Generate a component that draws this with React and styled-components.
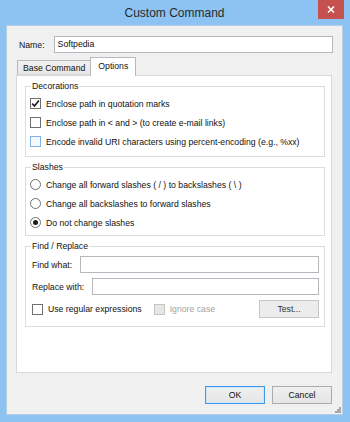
import React from "react";
import styled, { createGlobalStyle } from "styled-components";

const GlobalStyle = createGlobalStyle`
  html, body {
    margin: 0;
    padding: 0;
    background: #8cc3f3;
  }
  * {
    box-sizing: border-box;
  }
`;

const Window = styled.div`
  width: 350px;
  height: 422px;
  display: flex;
  flex-direction: column;
  padding: 0 7px 7px 6px;
  background: #8cc3f3;
  font-family: "Liberation Sans", Arial, sans-serif;
  font-size: 8.7px;
  color: #111;
`;

const TitleBar = styled.div`
  height: 25px;
  display: grid;
  grid-template-columns: 1fr auto 1fr;
  align-items: start;
`;

const Title = styled.div`
  grid-column: 2;
  font-size: 12px;
  line-height: 26px;
  color: #2a2a2a;
`;

const CloseButton = styled.div`
  grid-column: 3;
  justify-self: end;
  width: 26px;
  height: 19px;
  margin-right: -1px;
  background: #c75050;
  display: flex;
  align-items: center;
  justify-content: center;
`;

const Client = styled.div`
  position: relative;
  flex: 1;
  display: flex;
  flex-direction: column;
  background: #f0f0f0;
  border: 1px solid #b9cde0;
  padding: 10px 10px 10px 9px;
`;

const NameRow = styled.div`
  display: flex;
  align-items: center;
  gap: 9px;
  padding-left: 3px;
  margin-right: -1px;
`;

const Label = styled.span`
  white-space: nowrap;
  color: ${(p) => (p.$disabled ? "#a3a3a3" : "#111")};
`;

const TextInput = styled.div`
  flex: 1;
  height: 17px;
  background: #fff;
  border: 1px solid #b5b7bd;
  padding: 0 3px;
  line-height: 15px;
  white-space: nowrap;
`;

const TabStrip = styled.div`
  display: flex;
  align-items: flex-end;
  margin-top: 4px;
  padding-left: 1px;
  height: 18px;
  position: relative;
  z-index: 1;
`;

const Tab = styled.div`
  height: ${(p) => (p.$active ? "19px" : "15px")};
  margin-bottom: ${(p) => (p.$active ? "-1px" : "0")};
  margin-left: ${(p) => (p.$active ? "-1px" : "0")};
  padding: 0 ${(p) => (p.$active ? "7px" : "5px")};
  border: 1px solid #b8b8b8;
  border-bottom: ${(p) => (p.$active ? "none" : "1px solid #d9d9d9")};
  background: ${(p) =>
    p.$active ? "#fff" : "linear-gradient(#f2f2f2, #e6e6e6)"};
  line-height: ${(p) => (p.$active ? "16px" : "14px")};
  white-space: nowrap;
`;

const Panel = styled.div`
  flex: 1;
  background: #fff;
  border: 1px solid #d9d9d9;
  padding: 2px 6px 0 8px;
  display: flex;
  flex-direction: column;
  gap: 2px;
`;

const Group = styled.fieldset`
  margin: 0;
  padding: 0;
  min-width: 0;
  border: 1px solid #dcdcdc;
`;

const Legend = styled.legend`
  margin-left: 5px;
  padding: 0 1px;
  line-height: 16px;
  color: #111;
`;

const GroupBody = styled.div`
  display: flex;
  flex-direction: column;
  padding: ${(p) => p.$pad};
`;

const OptionRow = styled.div`
  display: flex;
  align-items: center;
  gap: ${(p) => p.$gap || "5px"};
  height: ${(p) => p.$h || "19px"};
  margin-top: ${(p) => p.$mt || "0"};
`;

const Box = styled.span`
  width: 11px;
  height: 11px;
  flex: none;
  display: flex;
  align-items: center;
  justify-content: center;
  border: 1px solid
    ${(p) => (p.$hover ? "#7fb4e6" : p.$disabled ? "#c4c4c4" : "#6f6f6f")};
  background: ${(p) =>
    p.$hover ? "#f3f9fe" : p.$disabled ? "#e6e6e6" : "#fff"};
`;

const Radio = styled.span`
  width: 11px;
  height: 11px;
  flex: none;
  border-radius: 50%;
  border: 1px solid #6f6f6f;
  background: #fff;
  display: flex;
  align-items: center;
  justify-content: center;

  &::after {
    content: "";
    width: 5px;
    height: 5px;
    border-radius: 50%;
    background: ${(p) => (p.$checked ? "#1a1a1a" : "transparent")};
  }
`;

const FieldRow = styled.div`
  display: flex;
  align-items: center;
  gap: 8px;
  margin-top: ${(p) => p.$mt};
`;

const Button = styled.div`
  width: 60px;
  height: 18px;
  flex: none;
  display: flex;
  align-items: center;
  justify-content: center;
  border: 1px solid ${(p) => (p.$default ? "#3d9ae8" : "#acacac")};
  box-shadow: ${(p) => (p.$default ? "inset 0 0 0 1px #cfe5f8" : "none")};
  background: linear-gradient(#f0f0f0, #e5e5e5);
  color: #111;
`;

const TestButton = styled(Button)`
  margin-left: auto;
  border-color: #c6c6c6;
  background: #ececec;
  color: #333;
`;

const ButtonRow = styled.div`
  display: flex;
  justify-content: flex-end;
  gap: 7px;
  margin-top: 13px;
`;

const Grip = styled.svg`
  position: absolute;
  right: 0;
  bottom: 0;
`;

function CheckMark() {
  return (
    <svg width="9" height="9" viewBox="0 0 9 9">
      <path d="M1.2 4.6 L3.5 7 L7.9 1.6" fill="none" stroke="#1c1c1c" strokeWidth="1.6" />
    </svg>
  );
}

function Check({ label, checked, hover }) {
  return (
    <OptionRow>
      <Box $hover={hover}>{checked && <CheckMark />}</Box>
      <Label>{label}</Label>
    </OptionRow>
  );
}

function RadioOption({ label, checked }) {
  return (
    <OptionRow>
      <Radio $checked={checked} />
      <Label>{label}</Label>
    </OptionRow>
  );
}

export default function App() {
  return (
    <>
      <GlobalStyle />
      <Window>
        <TitleBar>
          <Title>Custom Command</Title>
          <CloseButton>
            <svg width="8" height="7" viewBox="0 0 8 7">
              <path d="M1 0.5 L7 6.5 M7 0.5 L1 6.5" stroke="#fff" strokeWidth="1.6" />
            </svg>
          </CloseButton>
        </TitleBar>
        <Client>
          <NameRow>
            <Label>Name:</Label>
            <TextInput>Softpedia</TextInput>
          </NameRow>
          <TabStrip>
            <Tab>Base Command</Tab>
            <Tab $active>Options</Tab>
          </TabStrip>
          <Panel>
            <Group>
              <Legend>Decorations</Legend>
              <GroupBody $pad="0 0 5px 4px">
                <Check label="Enclose path in quotation marks" checked />
                <Check label="Enclose path in < and > (to create e-mail links)" />
                <Check label="Encode invalid URI characters using percent-encoding (e.g., %xx)" hover />
              </GroupBody>
            </Group>
            <Group>
              <Legend>Slashes</Legend>
              <GroupBody $pad="0 0 3px 4px">
                <RadioOption label="Change all forward slashes ( / ) to backslashes ( \ )" />
                <RadioOption label="Change all backslashes to forward slashes" />
                <RadioOption label="Do not change slashes" checked />
              </GroupBody>
            </Group>
            <Group>
              <Legend>Find / Replace</Legend>
              <GroupBody $pad="0 5px 8px 6px">
                <FieldRow $mt="2px">
                  <Label>Find what:</Label>
                  <TextInput />
                </FieldRow>
                <FieldRow $mt="5px">
                  <Label>Replace with:</Label>
                  <TextInput />
                </FieldRow>
                <OptionRow $mt="5px" $h="18px">
                  <Box />
                  <Label>Use regular expressions</Label>
                  <Box $disabled style={{ marginLeft: 7 }} />
                  <Label $disabled>Ignore case</Label>
                  <TestButton>Test...</TestButton>
                </OptionRow>
              </GroupBody>
            </Group>
          </Panel>
          <ButtonRow>
            <Button $default>OK</Button>
            <Button>Cancel</Button>
          </ButtonRow>
          <Grip width="8" height="8" viewBox="0 0 8 8">
            <g fill="#a8a8a8">
              <rect x="5" y="1" width="2" height="2" />
              <rect x="3" y="3" width="2" height="2" />
              <rect x="5" y="3" width="2" height="2" />
              <rect x="1" y="5" width="2" height="2" />
              <rect x="3" y="5" width="2" height="2" />
              <rect x="5" y="5" width="2" height="2" />
            </g>
          </Grip>
        </Client>
      </Window>
    </>
  );
}
